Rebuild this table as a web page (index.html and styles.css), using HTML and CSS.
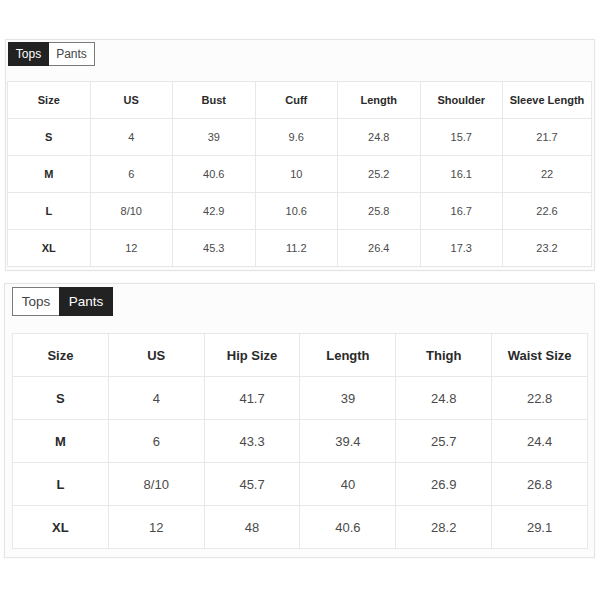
FILE: index.html
```html
<!DOCTYPE html>
<html>
<head>
<meta charset="utf-8">
<link rel="stylesheet" href="styles.css">
</head>
<body>
<div class="page">
  <section class="panel panel-sm">
    <div class="tabs">
      <span class="tab active">Tops</span><span class="tab">Pants</span>
    </div>
    <table class="chart">
      <colgroup><col class="c"><col class="c"><col class="c"><col class="c"><col class="c"><col class="c"><col class="c-last"></colgroup>
      <tr><th>Size</th><th>US</th><th>Bust</th><th>Cuff</th><th>Length</th><th>Shoulder</th><th>Sleeve Length</th></tr>
      <tr><th>S</th><td>4</td><td>39</td><td>9.6</td><td>24.8</td><td>15.7</td><td>21.7</td></tr>
      <tr><th>M</th><td>6</td><td>40.6</td><td>10</td><td>25.2</td><td>16.1</td><td>22</td></tr>
      <tr><th>L</th><td>8/10</td><td>42.9</td><td>10.6</td><td>25.8</td><td>16.7</td><td>22.6</td></tr>
      <tr><th>XL</th><td>12</td><td>45.3</td><td>11.2</td><td>26.4</td><td>17.3</td><td>23.2</td></tr>
    </table>
  </section>
  <section class="panel panel-lg">
    <div class="tabs">
      <span class="tab">Tops</span><span class="tab active">Pants</span>
    </div>
    <table class="chart">
      <tr><th>Size</th><th>US</th><th>Hip Size</th><th>Length</th><th>Thigh</th><th>Waist Size</th></tr>
      <tr><th>S</th><td>4</td><td>41.7</td><td>39</td><td>24.8</td><td>22.8</td></tr>
      <tr><th>M</th><td>6</td><td>43.3</td><td>39.4</td><td>25.7</td><td>24.4</td></tr>
      <tr><th>L</th><td>8/10</td><td>45.7</td><td>40</td><td>26.9</td><td>26.8</td></tr>
      <tr><th>XL</th><td>12</td><td>48</td><td>40.6</td><td>28.2</td><td>29.1</td></tr>
    </table>
  </section>
</div>
</body>
</html>
```
FILE: styles.css
```css
html, body {
  margin: 0;
  padding: 0;
  background: #ffffff;
  font-family: "Liberation Sans", Arial, sans-serif;
  color: #333;
}
.page {
  width: 600px;
  height: 600px;
  padding-top: 39px;
  box-sizing: border-box;
}
.panel {
  box-sizing: border-box;
  margin-left: 5px;
  width: 590px;
  border: 1px solid #e4e4e4;
  background: #fcfcfc;
  box-shadow: 0 0 2px rgba(0,0,0,0.04);
}
.panel-sm {
  height: 232px;
  padding: 2px 2px 3px 1px;
}
.panel-lg {
  margin-top: 12px;
  margin-left: 4px;
  width: 591px;
  height: 275px;
  padding: 3px 6px 7px 7px;
}
.tabs {
  display: flex;
}
.panel-sm .tabs {
  margin-left: 1px;
}
.tab {
  box-sizing: border-box;
  display: flex;
  align-items: center;
  justify-content: center;
  border: 1px solid #7a7a7a;
  background: #fff;
  color: #444;
}
.tab.active {
  background: #222;
  border-color: #222;
  color: #fff;
}
.panel-sm .tab {
  height: 24px;
  font-size: 12px;
}
.panel-sm .tab:first-child { width: 41px; }
.panel-sm .tab:last-child { width: 46px; border-left: none; }
.panel-lg .tab {
  height: 29px;
  font-size: 13.5px;
}
.panel-lg .tab:first-child { width: 47px; border-right: none; }
.panel-lg .tab:last-child { width: 54px; }

.chart {
  border-collapse: collapse;
  table-layout: fixed;
  background: #fff;
}
.chart th, .chart td {
  border: 1px solid #e8e8e8;
  text-align: center;
  padding: 0;
}
.chart th {
  font-weight: bold;
  color: #2a2a2a;
}
.chart td {
  color: #4a4a4a;
}
.panel-sm .chart {
  width: 584px;
  margin-top: 15px;
  font-size: 11px;
}
.panel-sm .chart col.c { width: 82.5px; }
.panel-sm .chart col.c-last { width: 89px; }
.panel-sm .chart tr { height: 37px; }
.panel-lg .chart {
  width: 576px;
  margin-top: 17px;
  font-size: 13px;
}
.panel-lg .chart tr { height: 43px; }
```
